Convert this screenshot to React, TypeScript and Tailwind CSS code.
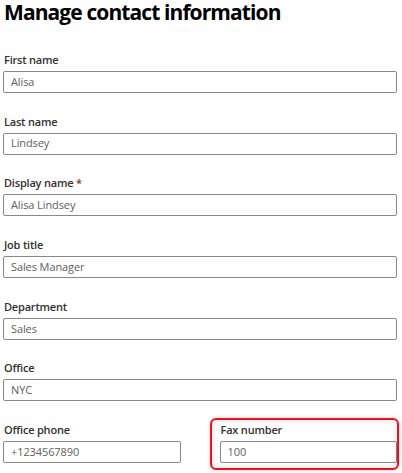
import React from "react";

const font = { fontFamily: "'Open Sans', 'Noto Sans', sans-serif" };

function Field({
  label,
  value,
  required,
}: {
  label: string;
  value: string;
  required?: boolean;
}) {
  return (
    <div className="flex flex-col">
      <label className="h-4 text-[11px] leading-4 font-semibold text-[#323130] pl-[1px] tracking-[-0.2px]">
        {label}
        {required && <span className="text-[#a4262c]"> *</span>}
      </label>
      <div className="mt-[3px] h-[22px] border border-[#8a8886] rounded-[2px] bg-white flex items-center px-[7px]">
        <span className="text-[11px] text-[#605e5c] tracking-[-0.1px]">{value}</span>
      </div>
    </div>
  );
}

export default function App() {
  return (
    <div className="w-[402px] h-[473px] bg-white overflow-hidden pt-[2px]" style={font}>
      <h1 className="pl-[4px] text-[21px] leading-[20px] font-bold text-black tracking-[-0.9px]">
        Manage contact information
      </h1>
      <div className="ml-[3px] w-[394px] mt-[30px] flex flex-col gap-[20.7px]">
        <Field label="First name" value="Alisa" />
        <Field label="Last name" value="Lindsey" />
        <Field label="Display name" value="Alisa Lindsey" required />
        <Field label="Job title" value="Sales Manager" />
        <Field label="Department" value="Sales" />
        <Field label="Office" value="NYC" />
        <div className="grid grid-cols-2 gap-[39px]">
          <Field label="Office phone" value="+1234567890" />
          <div className="relative">
            <Field label="Fax number" value="100" />
            <div className="absolute -left-[10px] -right-[2px] -top-[4px] -bottom-[7px] border-2 border-[#e81123] rounded-[6px] shadow-[inset_0_0_6px_rgba(0,0,0,0.15),0_0_4px_rgba(0,0,0,0.2)] pointer-events-none" />
          </div>
        </div>
      </div>
    </div>
  );
}
